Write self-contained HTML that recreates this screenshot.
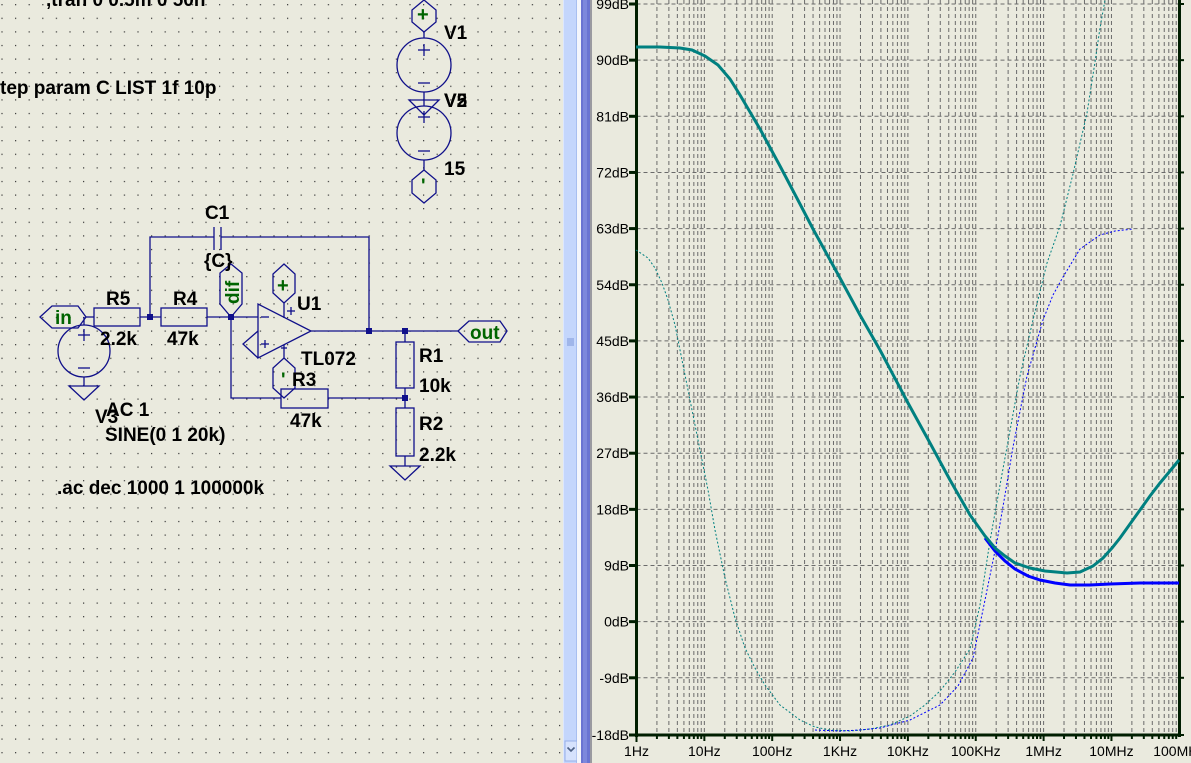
<!DOCTYPE html>
<html><head><meta charset="utf-8"><style>
html,body{margin:0;padding:0;width:1191px;height:763px;overflow:hidden;background:#eaeade;}
svg{position:absolute;left:0;top:0;}
text{font-family:"Liberation Sans",sans-serif;}
.s{font-size:19px;font-weight:bold;fill:#000;}
.g{font-size:19px;font-weight:bold;fill:#006400;}
.ax{font-size:14px;fill:#000;}
</style></head><body>
<svg width="1191" height="763" viewBox="0 0 1191 763" xmlns="http://www.w3.org/2000/svg">
<defs>
<pattern id="dots" x="1.4" y="4.1" width="13.6" height="13.6" patternUnits="userSpaceOnUse">
<rect x="0" y="0" width="1.2" height="1.2" fill="#333"/>
</pattern>
</defs>
<rect x="0" y="0" width="563" height="763" fill="#eaeade"/>
<rect x="0" y="0" width="563" height="763" fill="url(#dots)"/>

<g stroke="#10108a" stroke-width="1.3" fill="none">
<polygon points="424,0 436,10 436,22 424,32 412,22 412,10"/>
<line x1="424" y1="32" x2="424" y2="38"/>
<circle cx="424" cy="65" r="27"/>
<line x1="418" y1="50" x2="430" y2="50"/><line x1="424" y1="44" x2="424" y2="56"/>
<line x1="418" y1="83" x2="430" y2="83"/>
<line x1="424" y1="92" x2="424" y2="106"/>
<polygon points="409,100 439,100 424,115"/>
<circle cx="424" cy="133" r="27"/>
<line x1="418" y1="117" x2="430" y2="117"/><line x1="424" y1="111" x2="424" y2="123"/>
<line x1="418" y1="151" x2="430" y2="151"/>
<line x1="424" y1="160" x2="424" y2="170"/>
<polygon points="424,170 436,180 436,193 424,203 412,193 412,180"/>
<polyline points="150,317 150,237 214,237"/>
<polyline points="221,237 369,237 369,331"/>
<line x1="214" y1="227" x2="214" y2="250"/><line x1="221" y1="227" x2="221" y2="250"/>
<polygon points="40,317 52,306 78,306 86,317 78,328 52,328"/>
<line x1="86" y1="317" x2="94" y2="317"/>
<rect x="94" y="308" width="46" height="18"/>
<line x1="140" y1="317" x2="161" y2="317"/>
<rect x="161" y="308" width="46" height="18"/>
<line x1="207" y1="317" x2="258" y2="317"/>
<polygon points="231,317 242,304 242,273 231,264 220,273 220,304"/>
<polygon points="258,304 258,358 311,331"/>
<polyline points="258,331 243,344 258,358"/>
<line x1="261" y1="317" x2="269" y2="317"/>
<line x1="261" y1="344" x2="269" y2="344"/><line x1="265" y1="340" x2="265" y2="348"/>
<line x1="287" y1="311" x2="295" y2="311"/><line x1="291" y1="307" x2="291" y2="315"/>
<line x1="284" y1="318" x2="284" y2="303"/>
<polygon points="284,264 295,274 295,293 284,303 273,293 273,274"/>
<line x1="284" y1="345" x2="284" y2="358"/>
<line x1="281" y1="348" x2="287" y2="348"/>
<polygon points="284,358 295,368 295,388 284,398 273,388 273,368"/>
<line x1="311" y1="331" x2="458" y2="331"/>
<polygon points="458,331 469,321 500,321 507,331 500,342 469,342"/>
<line x1="405" y1="331" x2="405" y2="342"/>
<rect x="396" y="342" width="18" height="46"/>
<line x1="405" y1="388" x2="405" y2="408"/>
<rect x="396" y="408" width="18" height="48"/>
<line x1="405" y1="456" x2="405" y2="466"/>
<polygon points="390,466 420,466 405,480"/>
<polyline points="231,317 231,398 281,398"/>
<rect x="281" y="389" width="47" height="19"/>
<line x1="328" y1="398" x2="405" y2="398"/>
<circle cx="84" cy="351" r="26"/>
<line x1="84" y1="317" x2="84" y2="325"/>
<line x1="78" y1="335" x2="90" y2="335"/><line x1="84" y1="329" x2="84" y2="341"/>
<line x1="78" y1="368" x2="90" y2="368"/>
<line x1="84" y1="377" x2="84" y2="386"/>
<polygon points="69,386 99,386 84,400"/>
</g>
<g fill="#10108a">
<rect x="147" y="314" width="6" height="6"/><rect x="228" y="314" width="6" height="6"/>
<rect x="366" y="328" width="6" height="6"/><rect x="402" y="328" width="6" height="6"/>
<rect x="402" y="395" width="6" height="6"/>
</g>
<g>
<text class="s" x="46" y="6">,tran 0 0.5m 0 50n</text>
<text class="s" x="0" y="94">tep param C LIST 1f 10p</text>
<text class="g" x="417" y="21" style="font-size:20px">+</text>
<text class="s" x="444" y="39">V1</text>
<text class="s" x="444" y="107">V2</text>
<text class="s" x="444" y="107">V5</text>
<text class="s" x="444" y="175">15</text>
<text class="g" x="421" y="192">'</text>
<text class="s" x="205" y="219">C1</text>
<text class="s" x="204" y="267">{C}</text>
<text class="g" transform="translate(239,304) rotate(-90)">dif</text>
<text class="g" x="277" y="292" style="font-size:20px">+</text>
<text class="g" x="281" y="386">'</text>
<text class="s" x="297" y="310">U1</text>
<text class="s" x="301" y="365">TL072</text>
<text class="s" x="106" y="305">R5</text>
<text class="s" x="173" y="305">R4</text>
<text class="s" x="100" y="345">2.2k</text>
<text class="s" x="167" y="345">47k</text>
<text class="g" x="55" y="324">in</text>
<text class="g" x="470" y="339">out</text>
<text class="s" x="419" y="362">R1</text>
<text class="s" x="419" y="392">10k</text>
<text class="s" x="292" y="386">R3</text>
<text class="s" x="290" y="427">47k</text>
<text class="s" x="419" y="430">R2</text>
<text class="s" x="419" y="461">2.2k</text>
<text class="s" x="95" y="423">V3</text>
<text class="s" x="106" y="416">AC 1</text>
<text class="s" x="105" y="441">SINE(0 1 20k)</text>
<text class="s" x="57" y="494">.ac dec 1000 1 100000k</text>
</g>

<rect x="563" y="0" width="15" height="763" fill="#c4d6fc"/>
<rect x="563" y="0" width="1" height="763" fill="#dde7fd"/>
<rect x="576" y="0" width="1" height="763" fill="#a8bff0"/>
<rect x="565" y="741" width="12" height="20" fill="#d6e2fd" stroke="#98b0e8"/>
<path d="M567.5 747.5 L571 751 L574.5 747.5" stroke="#4d6185" stroke-width="1.6" fill="none"/>
<g stroke="#7d96d8"><line x1="567" y1="339" x2="574" y2="339"/><line x1="567" y1="341" x2="574" y2="341"/><line x1="567" y1="343" x2="574" y2="343"/><line x1="567" y1="345" x2="574" y2="345"/></g>
<rect x="577" y="0" width="4" height="763" fill="#f4f6fc"/>
<rect x="581" y="0" width="9" height="763" fill="#6a74d2"/>
<rect x="583" y="0" width="4" height="763" fill="#7d88dc"/>
<rect x="590" y="0" width="2" height="763" fill="#9a9aa0"/>
<rect x="592" y="0" width="599" height="763" fill="#eaeade"/>

<g id="grid" stroke="#6a6a6a" stroke-width="1" stroke-dasharray="4,3" fill="none"></g>
<g id="ticks" stroke="#001e00" stroke-width="2" fill="none"></g>
<g id="labels"></g>

<polyline fill="none" stroke="#008080" stroke-width="1" stroke-dasharray="2,2" points="636,250 648,258 655,268 662,283 668,300 675,325 682,360 690,400 700,450 708,490 715,530 725,578 735,618 745,648 755,668 765,685 780,705 800,720 815,727 830,730 850,731 870,729 890,725 910,716 925,705 940,691 955,672 970,649 980,605 990,541 1000,485 1007,447 1020,376 1033,320 1047,263 1060,226 1073,174 1087,113 1095,62 1100,28 1105,0"/>
<polyline fill="none" stroke="#0000ff" stroke-width="1" stroke-dasharray="2,2" points="815,730 840,731 860,730 880,728 910,720 940,705 958,686 973,658 985,600 997,541 1005,495 1013,447 1027,376 1043,320 1053,295 1063,277 1080,249 1100,235 1115,231 1133,229"/>
<polyline fill="none" stroke="#0000ff" stroke-width="3" points="985,538 995,551 1005,561 1015,569 1028,576 1040,580 1055,583 1070,585 1090,585 1110,584 1140,583 1179,583"/>
<polyline fill="none" stroke="#008080" stroke-width="3" points="636,47 660,47 680,48 692,50 705,56 718,65 730,79 740,95 750,112 760,129 780,166 800,204 813,229 840,278 860,315 880,350 908,403 930,443 950,480 970,515 985,536 995,548 1005,556 1015,563 1030,568 1045,571 1067,573 1080,572 1093,566 1103,558 1112,548 1120,538 1130,524 1140,510 1150,496 1160,483 1170,471 1179,460"/>
</svg>
<script>
(function(){
var NS="http://www.w3.org/2000/svg";
var g=document.getElementById("grid"),t=document.getElementById("ticks"),lb=document.getElementById("labels");
function el(p,n,a,txt){var e=document.createElementNS(NS,n);for(var k in a)e.setAttribute(k,a[k]);if(txt)e.textContent=txt;p.appendChild(e);return e;}
var x0=636.5,dec=67.85,y0=4,dy=56.15;
for(var k=0;k<13;k++){var y=y0+k*dy;el(g,"line",{x1:x0,y1:y,x2:1179,y2:y});}
for(var d=0;d<8;d++)for(var m=1;m<=9;m++){var x=x0+dec*(d+Math.log10(m));if(d==0&&m==1)continue;
el(g,"line",{x1:x,y1:0,x2:x,y2:734});
el(t,"line",{x1:x,y1:734,x2:x,y2:(m==1?741:739)});}
el(t,"line",{x1:x0,y1:0,x2:x0,y2:737,"stroke-width":3});
el(t,"line",{x1:1179.5,y1:0,x2:1179.5,y2:737,"stroke-width":3});
el(t,"line",{x1:x0-1,y1:735,x2:1181,y2:735,"stroke-width":3});
el(t,"line",{x1:x0,y1:735,x2:x0,y2:742,"stroke-width":2});
var L=["99dB","90dB","81dB","72dB","63dB","54dB","45dB","36dB","27dB","18dB","9dB","0dB","-9dB","-18dB"];
for(var k=0;k<14;k++){var y=y0+k*dy;if(k==13)y=735;
el(t,"line",{x1:629,y1:y,x2:x0,y2:y,"stroke-width":3});
el(t,"line",{x1:1179,y1:y,x2:1184,y2:y,"stroke-width":2});
el(lb,"text",{x:629,y:y+5,"text-anchor":"end","class":"ax"},L[k]);}
var X=["1Hz","10Hz","100Hz","1KHz","10KHz","100KHz","1MHz","10MHz","100MHz"];
for(var d=0;d<9;d++){el(lb,"text",{x:x0+dec*d,y:756,"text-anchor":"middle","class":"ax"},X[d]);}
})();
</script>
</body></html>
